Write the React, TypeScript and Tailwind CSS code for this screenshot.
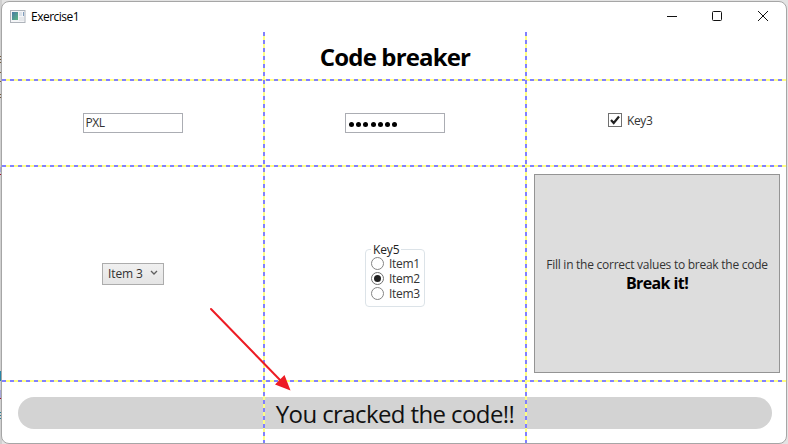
import type { ReactNode } from "react";

const ui = "font-['Open_Sans','Noto_Sans',sans-serif]";

const horizontalDash =
  "absolute left-0 h-[2px] w-full bg-[repeating-linear-gradient(90deg,#8080ff_0px,#8080ff_4px,#ffff80_4px,#ffff80_8px)]";
const verticalDash =
  "absolute top-0 h-full w-[2px] bg-[repeating-linear-gradient(180deg,#8080ff_0px,#8080ff_4px,#ffff80_4px,#ffff80_8px)]";

function AppIcon() {
  return (
    <svg width="16" height="14" viewBox="0 0 16 14" className="block">
      <defs>
        <linearGradient id="screen" x1="0" y1="0" x2="1" y2="1">
          <stop offset="0" stopColor="#4778a5" />
          <stop offset="1" stopColor="#5bb783" />
        </linearGradient>
      </defs>
      <rect x="0.5" y="0.5" width="14.5" height="12" fill="#f4f5f7" stroke="#aeb3ba" />
      <rect x="2" y="2" width="6" height="8" fill="url(#screen)" />
      <rect x="9" y="2" width="3" height="4" fill="#dde3ea" />
      <rect x="9" y="7" width="5" height="4" fill="#e6e8eb" />
      <rect x="13" y="2" width="1" height="4" fill="#7f9dbd" />
    </svg>
  );
}

function TitleBar() {
  return (
    <header className="flex h-[30px] items-center pl-2">
      <div className="pb-px">
        <AppIcon />
      </div>
      <span className="ml-[5px] grow text-[12px] leading-[30px] tracking-[-0.5px] text-black">Exercise1</span>
      <svg width="124" height="30" viewBox="0 0 124 30" fill="none" stroke="#111" strokeWidth="1">
        <path d="M5 14.5h10" />
        <rect x="50.5" y="9.5" width="9" height="9" rx="1" />
        <path d="M96 9l10 10M106 9l-10 10" />
      </svg>
    </header>
  );
}

function Radio({ label, checked = false }: { label: string; checked?: boolean }) {
  return (
    <div className="flex h-[15px] items-center">
      <span
        className={`flex size-[13px] shrink-0 items-center justify-center rounded-full border bg-white ${checked ? "border-[#707070]" : "border-[#858585]"}`}
      >
        {checked && <span className="size-[7px] rounded-full bg-[#212121]" />}
      </span>
      <span className="ml-[5px] pt-px text-[12px] leading-[14px] tracking-[-0.3px] text-[#333]">{label}</span>
    </div>
  );
}

function Cell({ children, className = "" }: { children?: ReactNode; className?: string }) {
  return <div className={`flex min-w-0 ${className}`}>{children}</div>;
}

export default function App() {
  return (
    <div className={`relative h-[444px] w-[788px] overflow-hidden bg-[#e3e3e3] ${ui}`}>
      <svg className="absolute left-0 top-0" width="2" height="444" shapeRendering="crispEdges">
        <rect width="2" height="444" fill="#d0d0d0" />
        <path d="M0 56.5h2M0 59.5h2M0 62.5h2M0 72.5h2M0 81.5h2M0 94.5h2M0 97.5h2" stroke="#765c3f" />
        <path d="M0 169h2" stroke="#a6a6d8" strokeWidth="5" />
        <path d="M0 174.500h2M0 398.500h2" stroke="#a01030" />
        <rect y="371" width="2" height="10" fill="#2785a6" />
        <rect y="390" width="2" height="8" fill="#a6a6d8" />
        <path d="M0 412.500h2M0 415.500h2M0 418.500h2" stroke="#277f96" />
      </svg>

      <div className="relative ml-px flex h-[444px] w-[786px] flex-col pt-px">
        <div className="h-[443px] overflow-hidden rounded-[8px] border border-[#a6a6a6] bg-white">
          <TitleBar />
          <main className="relative grid h-[411px] grid-cols-[262px_262px_260px] grid-rows-[48px_86px_215px_62px]">
            <Cell className="col-span-3 items-center justify-center">
              <h1 className="pl-[2px] pt-[2px] text-[24px] font-bold leading-8 tracking-[-0.85px] text-black">
                Code breaker
              </h1>
            </Cell>

            <Cell className="items-center justify-center pr-px">
              <div className="h-5 w-[100px] border border-[#abadb3] bg-white px-[2px] text-[12px] leading-[18px] tracking-[-0.4px] text-[#333]">
                PXL
              </div>
            </Cell>
            <Cell className="items-center justify-center">
              <div className="flex h-5 w-[100px] items-center gap-[2.200px] border border-[#abadb3] bg-white px-[3px] pt-[3px]">
                {[0, 1, 2, 3, 4, 5, 6].map((n) => (
                  <span key={n} className="size-[5px] rounded-full bg-black" />
                ))}
              </div>
            </Cell>
            <Cell className="items-start pl-[82px] pt-[33px]">
              <span className="flex size-[14px] items-center justify-center border border-[#707070] bg-white">
                <svg width="12" height="12" viewBox="0 0 12 12" fill="none" stroke="#212121" strokeWidth="2.2">
                  <path d="M2 6l2.700 3L10 2.500" />
                </svg>
              </span>
              <span className="ml-[5px] text-[12px] leading-[15px] tracking-[-0.4px] text-[#333]">Key3</span>
            </Cell>

            <Cell className="items-center justify-center">
              <div className="flex h-[22px] w-[62px] items-center border border-[#acacac] bg-gradient-to-b from-[#f0f0f0] to-[#e5e5e5] pl-[5px]">
                <span className="w-[38px] whitespace-nowrap pt-px text-[12px] leading-5 tracking-[-0.1px] text-[#333]">
                  Item 3
                </span>
                <svg width="8" height="6" viewBox="0 0 8 6" fill="none" stroke="#606060" strokeWidth="1.300" className="mb-px ml-1">
                  <path d="M1 1l3 3 3-3" />
                </svg>
              </div>
            </Cell>
            <Cell className="items-start justify-center pt-[83px]">
              <fieldset className="relative h-[58px] w-[60px] rounded-[4px] border border-[#dce3e8] pl-[5px] pt-[6px]">
                <span className="absolute left-[5px] top-[-7px] bg-white px-[2px] text-[12px] leading-[14px] tracking-[-0.15px] text-[#222]">
                  Key5
                </span>
                <Radio label="Item1" />
                <Radio label="Item2" checked />
                <Radio label="Item3" />
              </fieldset>
            </Cell>
            <Cell className="pb-2 pl-2 pr-[6px] pt-2">
              <button className="flex w-full flex-col items-center justify-center border border-[#949494] bg-[#ddd] pt-[3px] text-black">
                <span className="whitespace-nowrap text-[12px] leading-4 tracking-[-0.26px] text-[#333]">
                  Fill in the correct values to break the code
                </span>
                <span className="text-[16px] font-bold leading-[21px] tracking-[-0.6px]">Break it!</span>
              </button>
            </Cell>

            <Cell className="col-span-3 pb-[14px] pl-4 pt-4">
              <div className="flex w-[754px] shrink-0 items-center justify-center rounded-full bg-[#d3d3d3] pt-[2px] text-[24px] leading-[30px] tracking-[-0.6px] text-[#111]">
                You cracked the code!!
              </div>
            </Cell>

            <div className={`${horizontalDash} top-[47px]`} />
            <div className={`${horizontalDash} top-[133px]`} />
            <div className={`${horizontalDash} top-[348px]`} />
            <div className={`${verticalDash} left-[261px]`} />
            <div className={`${verticalDash} left-[523px]`} />
          </main>
        </div>
      </div>

      <svg className="absolute left-[200px] top-[300px]" width="100" height="100" viewBox="0 0 100 100">
        <path d="M11 9L81 81" stroke="#ed1c24" strokeWidth="2" strokeLinecap="round" />
        <path d="M90.500 90.500L84.500 75 75 84.500Z" fill="#ed1c24" />
      </svg>
    </div>
  );
}
